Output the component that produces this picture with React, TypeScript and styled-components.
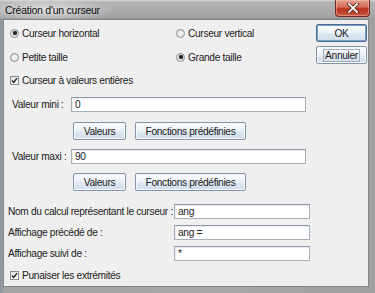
import React from 'react';
import styled, { createGlobalStyle } from 'styled-components';

const GlobalStyle = createGlobalStyle`
  html, body {
    margin: 0;
    padding: 0;
    background: #9a9a9a;
  }
  * { box-sizing: border-box; }
`;

const Frame = styled.div`
  width: 375px;
  height: 293px;
  display: flex;
  flex-direction: column;
  background: linear-gradient(90deg, #8c949b 0px, #a3a3a3 4px, #a6a6a6 60%, #a0a0a0 100%);
  font-family: 'Liberation Sans', Arial, sans-serif;
  color: #1b1b1b;
  overflow: hidden;
`;

const TitleBar = styled.div`
  height: 19px;
  display: flex;
  justify-content: space-between;
  align-items: flex-start;
  padding-left: 5px;
  background:
    radial-gradient(ellipse 70px 12px at 45px 10px, rgba(235, 235, 235, 0.85), rgba(235, 235, 235, 0) 100%),
    linear-gradient(180deg, #d8d8d8 0px, #b4b4b4 2px, #a9a9a9 12px, #a2a2a2 18px, #8c8c8c 19px);
`;

const Title = styled.span`
  margin-top: 4px;
  font-size: 10.5px;
  letter-spacing: -0.25px;
  color: #111;
`;

const CloseButton = styled.div`
  width: 35px;
  height: 17px;
  margin-right: 5px;
  display: flex;
  align-items: center;
  justify-content: center;
  border: 1px solid #6e2a22;
  border-top: none;
  border-radius: 0 0 4px 4px;
  background: linear-gradient(180deg, #e3a090 0%, #d26b55 45%, #b8321c 55%, #c9583f 100%);
  box-shadow: inset 0 0 0 1px rgba(255, 200, 190, 0.45);
`;

const Body = styled.div`
  margin-left: 3px;
  width: 366px;
  height: 268px;
  border: 1px solid #7f868d;
  background: #efefef;
  display: flex;
  flex-direction: column;
  font-size: 10.2px;
  letter-spacing: -0.33px;
`;

const TopArea = styled.div`
  display: flex;
  height: 71px;
`;

const Options = styled.div`
  flex: 1;
  padding: 1px 0 0 6px;
  display: grid;
  grid-template-columns: 166px auto;
  grid-template-rows: 24px 24px 22px;
`;

const Choice = styled.label<{ $span?: boolean }>`
  display: flex;
  align-items: center;
  gap: 3px;
  grid-column: ${(p) => (p.$span ? '1 / span 2' : 'auto')};
  white-space: nowrap;
`;

const RadioMark = styled.span<{ $on?: boolean }>`
  width: 9px;
  height: 9px;
  border-radius: 50%;
  border: 1px solid #8c8e90;
  background: radial-gradient(circle, #f4f4f4 0%, #dcdcdc 100%);
  display: flex;
  align-items: center;
  justify-content: center;
  &::after {
    content: '';
    width: 4px;
    height: 4px;
    border-radius: 50%;
    background: ${(p) => (p.$on ? '#262626' : 'transparent')};
    box-shadow: ${(p) => (p.$on ? '0 0 1px #555' : 'none')};
  }
`;

const CheckMark = styled.span`
  width: 9px;
  height: 9px;
  border: 1px solid #8c8e90;
  background: linear-gradient(135deg, #e6e6e6, #fbfbfb);
  display: flex;
  align-items: center;
  justify-content: center;
`;

const ButtonColumn = styled.div`
  width: 51px;
  margin-right: 1px;
  padding-top: 4px;
  display: flex;
  flex-direction: column;
  gap: 4px;
`;

const Button = styled.div<{ $w?: number; $default?: boolean }>`
  width: ${(p) => (p.$w ? `${p.$w}px` : '100%')};
  height: 18px;
  display: flex;
  align-items: center;
  justify-content: center;
  border: 1px solid ${(p) => (p.$default ? '#4a6d95' : '#8593a8')};
  box-shadow: ${(p) => (p.$default ? 'inset 0 0 0 1px #7e9cc0' : 'inset 0 0 0 1px #f7f9fc')};
  border-radius: 2px;
  background: linear-gradient(180deg, #fbfcfe 0%, #eef3f9 45%, #dfe8f3 55%, #cfdcec 100%);
  color: #1a1a1a;
`;

const FocusText = styled.span`
  padding: 0 1px;
  border: 1px solid #a3aebd;
  line-height: 11px;
`;

const FieldRow = styled.div<{ $mt: number; $pl: number; $label: number }>`
  margin-top: ${(p) => p.$mt}px;
  padding-left: ${(p) => p.$pl}px;
  display: grid;
  grid-template-columns: ${(p) => p.$label}px auto;
  align-items: center;
  height: 15px;
`;

const Label = styled.span`
  white-space: nowrap;
`;

const Field = styled.div<{ $w: number }>`
  width: ${(p) => p.$w}px;
  height: 15px;
  display: flex;
  align-items: center;
  padding-left: 3px;
  background: #fff;
  border: 1px solid #a6afba;
  border-top-color: #8e98a5;
  box-shadow: inset 1px 1px 0 #e9edf2;
`;

const ButtonRow = styled.div<{ $mt: number }>`
  margin-top: ${(p) => p.$mt}px;
  padding-left: 69px;
  display: flex;
  gap: 9px;
`;

const BottomCheck = styled.div`
  margin-top: 7px;
  padding-left: 6px;
  height: 14px;
  display: flex;
`;

const Check = () => (
  <CheckMark>
    <svg width="7" height="7" viewBox="0 0 7 7">
      <polyline points="1,3.5 2.8,5.5 6,1.2" fill="none" stroke="#222" strokeWidth="1.4" />
    </svg>
  </CheckMark>
);

const CloseGlyph = () => (
  <svg width="12" height="10" viewBox="0 0 12 10">
    <path d="M2 1 L10 9 M10 1 L2 9" stroke="#4a1a14" strokeWidth="3.4" strokeLinecap="square" />
    <path d="M2 1 L10 9 M10 1 L2 9" stroke="#ffffff" strokeWidth="1.8" strokeLinecap="square" />
  </svg>
);

export default function App() {
  return (
    <>
      <GlobalStyle />
      <Frame>
        <TitleBar>
          <Title>Création d'un curseur</Title>
          <CloseButton>
            <CloseGlyph />
          </CloseButton>
        </TitleBar>
        <Body>
          <TopArea>
            <Options>
              <Choice>
                <RadioMark $on />
                Curseur horizontal
              </Choice>
              <Choice>
                <RadioMark />
                Curseur vertical
              </Choice>
              <Choice>
                <RadioMark />
                Petite taille
              </Choice>
              <Choice>
                <RadioMark $on />
                Grande taille
              </Choice>
              <Choice $span>
                <Check />
                Curseur à valeurs entières
              </Choice>
            </Options>
            <ButtonColumn>
              <Button $default>OK</Button>
              <Button>
                <FocusText>Annuler</FocusText>
              </Button>
            </ButtonColumn>
          </TopArea>

          <FieldRow $mt={6} $pl={8} $label={59}>
            <Label>Valeur mini :</Label>
            <Field $w={235}>0</Field>
          </FieldRow>
          <ButtonRow $mt={10}>
            <Button $w={53}>Valeurs</Button>
            <Button $w={111}>Fonctions prédéfinies</Button>
          </ButtonRow>

          <FieldRow $mt={9} $pl={8} $label={59}>
            <Label>Valeur maxi :</Label>
            <Field $w={235}>90</Field>
          </FieldRow>
          <ButtonRow $mt={9}>
            <Button $w={53}>Valeurs</Button>
            <Button $w={111}>Fonctions prédéfinies</Button>
          </ButtonRow>

          <FieldRow $mt={13} $pl={4} $label={166}>
            <Label>Nom du calcul représentant le curseur :</Label>
            <Field $w={136}>ang</Field>
          </FieldRow>
          <FieldRow $mt={6} $pl={4} $label={166}>
            <Label>Affichage précédé de :</Label>
            <Field $w={136}>ang =</Field>
          </FieldRow>
          <FieldRow $mt={6} $pl={4} $label={166}>
            <Label>Affichage suivi de :</Label>
            <Field $w={136}>*</Field>
          </FieldRow>

          <BottomCheck>
            <Choice>
              <Check />
              Punaiser les extrémités
            </Choice>
          </BottomCheck>
        </Body>
      </Frame>
    </>
  );
}
